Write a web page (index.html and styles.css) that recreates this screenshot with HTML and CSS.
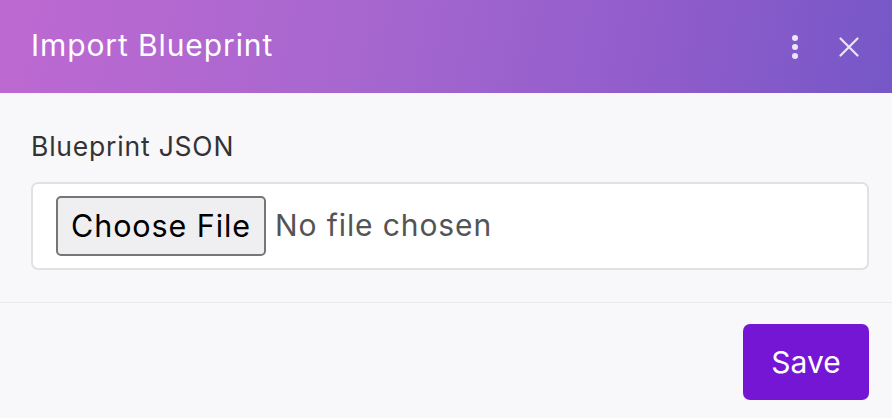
FILE: index.html
```html
<!DOCTYPE html>
<html lang="en">
<head>
<meta charset="utf-8">
<title>Import Blueprint</title>
<link rel="stylesheet" href="styles.css">
</head>
<body>
<div class="dialog">
  <header class="dialog-header">
    <h1 class="dialog-title">Import Blueprint</h1>
    <div class="header-actions">
      <button class="icon-btn" aria-label="More options">
        <svg width="8" height="24" viewBox="0 0 8 24"><circle cx="4" cy="3" r="3" fill="#ebe6f7"/><circle cx="4" cy="12" r="3" fill="#ebe6f7"/><circle cx="4" cy="21" r="3" fill="#ebe6f7"/></svg>
      </button>
      <button class="icon-btn" aria-label="Close">
        <svg width="20" height="20" viewBox="0 0 20 20"><path d="M1.5 1.5 L18.5 18.5 M18.5 1.5 L1.5 18.5" stroke="#ebe6f7" stroke-width="2.2" stroke-linecap="round" fill="none"/></svg>
      </button>
    </div>
  </header>
  <main class="dialog-body">
    <div class="field-label">Blueprint JSON</div>
    <div class="file-field">
      <span class="file-btn">Choose File</span>
      <span class="file-name">No file chosen</span>
    </div>
  </main>
  <footer class="dialog-footer">
    <button class="save-btn">Save</button>
  </footer>
</div>
</body>
</html>
```
FILE: styles.css
```css
* { box-sizing: border-box; }
html, body {
  margin: 0;
  padding: 0;
  width: 892px;
  height: 418px;
  overflow: hidden;
  background: #f8f7fa;
  font-family: Inter, "Liberation Sans", sans-serif;
}
.dialog {
  display: flex;
  flex-direction: column;
  height: 418px;
}
.dialog-header {
  height: 93px;
  display: flex;
  align-items: center;
  justify-content: space-between;
  padding: 0 33px 0 31px;
  background: linear-gradient(100deg, #be69d2 0%, #a767cf 40%, #8f5ccb 75%, #7657c7 100%);
}
.dialog-title {
  margin: 0 0 4px 0;
  font-size: 30px;
  font-weight: 400;
  color: #ffffff;
  letter-spacing: 0.03em;
}
.header-actions {
  display: flex;
  align-items: center;
  gap: 40px;
}
.icon-btn {
  background: none;
  border: 0;
  padding: 0;
  display: flex;
  align-items: center;
  justify-content: center;
  cursor: pointer;
}
.dialog-body {
  padding: 38px 23px 32px 31px;
  border-bottom: 1px solid #ebeaee;
}
.field-label {
  font-size: 26.5px;
  color: #333333;
  line-height: 30px;
  letter-spacing: 0.03em;
  margin-bottom: 21px;
}
.file-field {
  height: 88px;
  background: #ffffff;
  border: 2px solid #e1e0e4;
  border-radius: 7px;
  display: flex;
  align-items: center;
  padding-left: 23px;
  gap: 9px;
}
.file-btn {
  height: 60px;
  width: 210px;
  display: flex;
  align-items: center;
  justify-content: center;
  background: #efeef1;
  border: 2px solid #767676;
  border-radius: 5px;
  font-size: 30.5px;
  letter-spacing: 0.03em;
  color: #000000;
  padding-bottom: 2px;
}
.file-name {
  font-size: 30px;
  letter-spacing: 0.03em;
  color: #545454;
  padding-bottom: 2px;
}
.dialog-footer {
  flex: 1;
  display: flex;
  justify-content: flex-end;
  align-items: flex-start;
  padding: 21px 23px 0 0;
}
.save-btn {
  width: 126px;
  height: 76px;
  background: #7516d4;
  color: #ffffff;
  border: 0;
  border-radius: 7px;
  font-family: Inter, "Liberation Sans", sans-serif;
  font-size: 30px;
  font-weight: 400;
  cursor: pointer;
}
```
